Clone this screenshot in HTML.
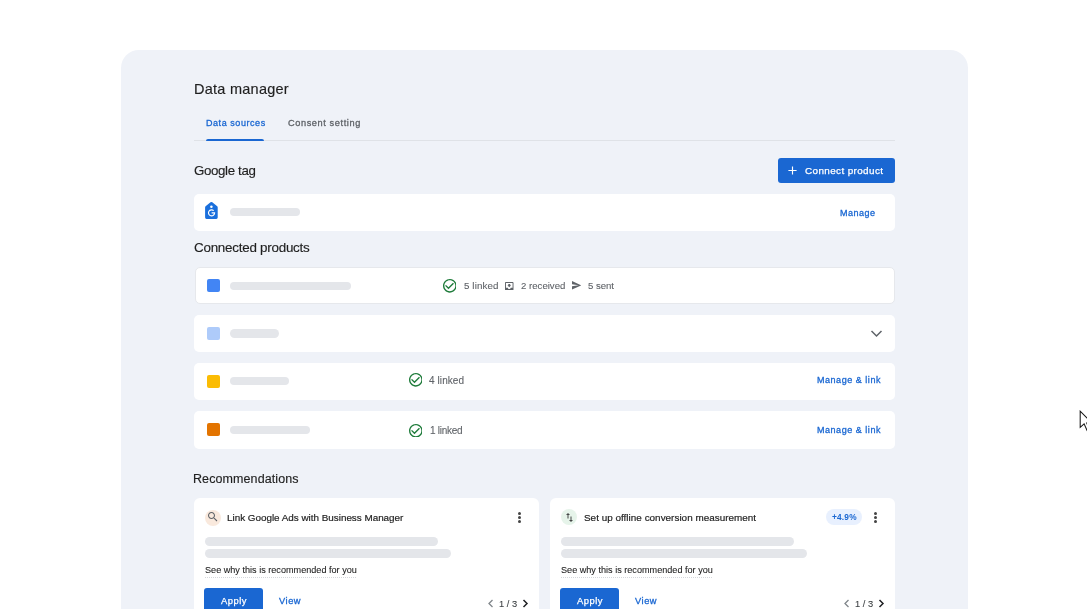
<!DOCTYPE html>
<html><head><meta charset="utf-8">
<style>
html,body{margin:0;padding:0;}
body{width:1087px;height:609px;overflow:hidden;background:#ffffff;position:relative;font-family:"Liberation Sans",sans-serif;}
.a{position:absolute;}
.t{position:absolute;white-space:nowrap;line-height:1;will-change:transform;}
.panel{left:121px;top:50px;width:847px;height:620px;border-radius:18px;background:#eff2f8;}
.card{position:absolute;left:194px;width:701px;background:#fff;border-radius:5px;}
.sk{position:absolute;height:8.5px;border-radius:5px;background:#e4e6ea;}
.sq{position:absolute;width:13px;height:13px;border-radius:2px;left:207px;}
.blue{color:#1a67d2;}
.dark{color:#1f1f1f;}
.grey{color:#5f6368;}
.med{-webkit-text-stroke:0.25px currentColor;}
</style></head>
<body>
<div class="a panel"></div>

<!-- header -->
<div class="a" style="left:194px;top:140px;width:701px;height:1px;background:#dfe2e7;"></div>
<div class="a" style="left:206px;top:138.5px;width:58px;height:2.5px;border-radius:2px 2px 0 0;background:#1a67d2;"></div>


<!-- button -->
<div class="a" style="left:778px;top:158px;width:117px;height:25px;border-radius:3px;background:#1a67d2;"></div>
<svg class="a" style="left:787px;top:165px;" width="11" height="11" viewBox="0 0 11 11"><path d="M5.5 1.4V9.6M1.4 5.5H9.6" stroke="#fff" stroke-width="1.15" fill="none"/></svg>

<!-- google tag card -->
<div class="card" style="top:194px;height:37px;"></div>
<svg class="a" style="left:204px;top:201px;" width="15" height="20" viewBox="0 0 15 20"><path d="M6.5 1.3 Q7.4 0.6 8.3 1.3 L13.2 5.3 Q13.7 5.7 13.7 6.4 V16.6 Q13.7 18 12.3 18 H2.5 Q1.1 18 1.1 16.6 V6.4 Q1.1 5.7 1.6 5.3 Z" fill="#1a6fdc"/><circle cx="7.4" cy="5.8" r="1.25" fill="#fff"/><path d="M7.6 11.9 H10.6 A3.05 3.05 0 1 1 9.7 9.7" stroke="#fff" stroke-width="1.15" fill="none"/></svg>
<div class="sk" style="left:230px;top:207.5px;width:70px;"></div>


<!-- card 1 -->
<div class="card" style="left:194.5px;top:267px;height:34.5px;border:1px solid #e6e8ec;width:698px;"></div>
<div class="sq" style="top:278.5px;background:#4285f4;"></div>
<div class="sk" style="left:230px;top:281.5px;width:121px;"></div>
<svg class="a" style="left:442.8px;top:279px;" width="13.7" height="13.7" viewBox="2 2 20 20"><path d="M16.59 7.58L10 14.17l-3.59-3.58L5 12l5 5 8-8zM12 2C6.48 2 2 6.48 2 12s4.48 10 10 10 10-4.48 10-10S17.52 2 12 2zm0 18c-4.42 0-8-3.58-8-8s3.58-8 8-8 8 3.58 8 8-3.58 8-8 8z" fill="#1e7b3a"/></svg>
<svg class="a" style="left:505px;top:281.5px;" width="8.5" height="8.5" viewBox="3 3 18 18"><path d="M19 3H4.99c-1.11 0-1.98.9-1.98 2L3 19c0 1.1.88 2 1.99 2H19c1.1 0 2-.9 2-2V5c0-1.1-.9-2-2-2zm0 12h-4c0 1.66-1.35 3-3 3s-3-1.34-3-3H4.99V5H19v10zm-3-5h-2V7h-4v3H8l4 4 4-4z" fill="#5f6368"/></svg>
<svg class="a" style="left:572px;top:281.4px;" width="9.2" height="8.6" viewBox="2 3 21 18" preserveAspectRatio="none"><path d="M2.01 21L23 12 2.01 3 2 10l15 2-15 2z" fill="#5f6368"/></svg>

<!-- card 2 -->
<div class="card" style="top:315px;height:37px;"></div>
<div class="sq" style="top:326.8px;background:#aecbfa;"></div>
<div class="sk" style="left:230px;top:329px;width:49px;"></div>
<svg class="a" style="left:869px;top:328px;" width="15" height="11" viewBox="0 0 15 11"><path d="M2.5 3 L7.5 8 L12.5 3" stroke="#5f6368" stroke-width="1.5" fill="none"/></svg>

<!-- card 3 -->
<div class="card" style="top:363px;height:37px;"></div>
<div class="sq" style="top:374.5px;background:#fbbc04;"></div>
<div class="sk" style="left:230px;top:376.5px;width:59px;"></div>
<svg class="a" style="left:408.5px;top:373.3px;" width="13.7" height="13.7" viewBox="2 2 20 20"><path d="M16.59 7.58L10 14.17l-3.59-3.58L5 12l5 5 8-8zM12 2C6.48 2 2 6.48 2 12s4.48 10 10 10 10-4.48 10-10S17.52 2 12 2zm0 18c-4.42 0-8-3.58-8-8s3.58-8 8-8 8 3.58 8 8-3.58 8-8 8z" fill="#1e7b3a"/></svg>

<!-- card 4 -->
<div class="card" style="top:411px;height:37.5px;"></div>
<div class="sq" style="top:422.5px;background:#e37400;"></div>
<div class="sk" style="left:230px;top:425.6px;width:80px;"></div>
<svg class="a" style="left:408.5px;top:423.6px;" width="13.7" height="13.7" viewBox="2 2 20 20"><path d="M16.59 7.58L10 14.17l-3.59-3.58L5 12l5 5 8-8zM12 2C6.48 2 2 6.48 2 12s4.48 10 10 10 10-4.48 10-10S17.52 2 12 2zm0 18c-4.42 0-8-3.58-8-8s3.58-8 8-8 8 3.58 8 8-3.58 8-8 8z" fill="#1e7b3a"/></svg>


<!-- rec card 1 -->
<div class="a" style="left:194px;top:498px;width:345px;height:130px;background:#fff;border-radius:6px;"></div>
<div class="a" style="left:205px;top:509.5px;width:16px;height:16px;border-radius:50%;background:#f9e9dd;"></div>
<svg class="a" style="left:208.3px;top:512.3px;" width="9.7" height="9.7" viewBox="3 3 18 18"><path d="M15.5 14h-.79l-.28-.27C15.41 12.59 16 11.11 16 9.5 16 5.91 13.09 3 9.5 3S3 5.91 3 9.5 5.91 16 9.5 16c1.61 0 3.09-.59 4.23-1.57l.27.28v.79l5 4.99L20.49 19l-4.99-5zm-6 0C7.01 14 5 11.99 5 9.5S7.01 5 9.5 5 14 7.01 14 9.5 11.99 14 9.5 14z" fill="#5f6368"/></svg>
<div class="a" style="left:518px;top:511.7px;width:3px;height:3px;border-radius:50%;background:#444;"></div>
<div class="a" style="left:518px;top:515.8px;width:3px;height:3px;border-radius:50%;background:#444;"></div>
<div class="a" style="left:518px;top:519.9px;width:3px;height:3px;border-radius:50%;background:#444;"></div>
<div class="sk" style="left:205px;top:537px;width:233px;"></div>
<div class="sk" style="left:205px;top:549px;width:246px;"></div>
<div class="a" style="left:205px;top:577px;width:151px;height:0;border-top:1px dotted #d5d8dc;"></div>
<div class="a" style="left:204px;top:588px;width:59px;height:30px;border-radius:3px;background:#1a67d2;"></div>
<svg class="a" style="left:486px;top:598px;" width="9" height="11" viewBox="0 0 9 11"><path d="M6.5 2 L3 5.5 L6.5 9" stroke="#80868b" stroke-width="1.3" fill="none"/></svg>
<svg class="a" style="left:521px;top:598px;" width="9" height="11" viewBox="0 0 9 11"><path d="M2.5 2 L6 5.5 L2.5 9" stroke="#202124" stroke-width="1.5" fill="none"/></svg>

<!-- rec card 2 -->
<div class="a" style="left:550px;top:498px;width:345px;height:130px;background:#fff;border-radius:6px;"></div>
<div class="a" style="left:561px;top:509px;width:16px;height:16px;border-radius:50%;background:#e6f4ea;"></div>
<svg class="a" style="left:565.9px;top:512.7px;" width="7" height="9" viewBox="5 3 14 18"><path d="M16 17.01V10h-2v7.01h-3L15 21l4-3.99h-3zM9 3L5 6.99h3V14h2V6.99h3L9 3z" fill="#444746"/></svg>
<div class="a" style="left:826px;top:509.4px;width:36px;height:15.6px;border-radius:8px;background:#e8f0fe;"></div>
<div class="a" style="left:874.3px;top:511.7px;width:3px;height:3px;border-radius:50%;background:#444;"></div>
<div class="a" style="left:874.3px;top:515.8px;width:3px;height:3px;border-radius:50%;background:#444;"></div>
<div class="a" style="left:874.3px;top:519.9px;width:3px;height:3px;border-radius:50%;background:#444;"></div>
<div class="sk" style="left:561px;top:537px;width:233px;"></div>
<div class="sk" style="left:561px;top:549px;width:246px;"></div>
<div class="a" style="left:561px;top:577px;width:151px;height:0;border-top:1px dotted #d5d8dc;"></div>
<div class="a" style="left:560px;top:588px;width:59px;height:30px;border-radius:3px;background:#1a67d2;"></div>
<svg class="a" style="left:842px;top:598px;" width="9" height="11" viewBox="0 0 9 11"><path d="M6.5 2 L3 5.5 L6.5 9" stroke="#80868b" stroke-width="1.3" fill="none"/></svg>
<svg class="a" style="left:877px;top:598px;" width="9" height="11" viewBox="0 0 9 11"><path d="M2.5 2 L6 5.5 L2.5 9" stroke="#202124" stroke-width="1.5" fill="none"/></svg>

<!-- cursor -->
<svg class="a" style="left:1078.6px;top:409.5px;" width="14" height="22" viewBox="0 0 14 22"><path d="M1.2 1.2 V17.3 L5.1 13.9 L8.1 20.5 L10.5 19.5 L7.7 13.0 L12.9 13.0 Z" fill="#fff" stroke="#151515" stroke-width="1.05" stroke-linejoin="miter"/></svg>
<div class="t" style="left:193.90px;top:81.70px;font-size:14.5px;color:#1f1f1f;letter-spacing:0.255px;-webkit-text-stroke:0.15px #1f1f1f;">Data manager</div>
<div class="t" style="left:205.80px;top:119.20px;font-size:9.0px;color:#1a67d2;letter-spacing:0.555px;-webkit-text-stroke:0.3px #1a67d2;">Data sources</div>
<div class="t" style="left:288.20px;top:119.20px;font-size:9.2px;color:#5f6368;letter-spacing:0.6px;-webkit-text-stroke:0.3px #5f6368;">Consent setting</div>
<div class="t" style="left:194.40px;top:163.90px;font-size:13.3px;color:#1f1f1f;letter-spacing:-0.356px;-webkit-text-stroke:0.15px #1f1f1f;">Google tag</div>
<div class="t" style="left:804.80px;top:166.00px;font-size:9.9px;color:#fff;letter-spacing:0.393px;-webkit-text-stroke:0.25px #fff;">Connect product</div>
<div class="t" style="left:839.60px;top:208.80px;font-size:9.0px;color:#1a67d2;letter-spacing:0.52px;-webkit-text-stroke:0.3px #1a67d2;">Manage</div>
<div class="t" style="left:194.00px;top:240.80px;font-size:13.4px;color:#1f1f1f;letter-spacing:-0.241px;-webkit-text-stroke:0.15px #1f1f1f;">Connected products</div>
<div class="t" style="left:463.80px;top:280.80px;font-size:9.8px;color:#5f6368;letter-spacing:0.1px;-webkit-text-stroke:0.1px #5f6368;">5 linked</div>
<div class="t" style="left:521.00px;top:280.80px;font-size:9.6px;color:#5f6368;letter-spacing:0.011px;-webkit-text-stroke:0.1px #5f6368;">2 received</div>
<div class="t" style="left:588.30px;top:280.80px;font-size:9.6px;color:#5f6368;letter-spacing:-0.02px;-webkit-text-stroke:0.1px #5f6368;">5 sent</div>
<div class="t" style="left:429.40px;top:375.60px;font-size:10px;color:#5f6368;letter-spacing:0.086px;-webkit-text-stroke:0.1px #5f6368;">4 linked</div>
<div class="t" style="left:816.80px;top:376.20px;font-size:9.0px;color:#1a67d2;letter-spacing:0.533px;-webkit-text-stroke:0.3px #1a67d2;">Manage &amp; link</div>
<div class="t" style="left:430.00px;top:425.50px;font-size:10px;color:#5f6368;letter-spacing:-0.257px;-webkit-text-stroke:0.1px #5f6368;">1 linked</div>
<div class="t" style="left:816.80px;top:426.30px;font-size:9.0px;color:#1a67d2;letter-spacing:0.533px;-webkit-text-stroke:0.3px #1a67d2;">Manage &amp; link</div>
<div class="t" style="left:193.40px;top:473.00px;font-size:12.5px;color:#1f1f1f;letter-spacing:0.093px;-webkit-text-stroke:0.15px #1f1f1f;">Recommendations</div>
<div class="t" style="left:227.40px;top:512.70px;font-size:9.9px;color:#1f1f1f;letter-spacing:-0.011px;-webkit-text-stroke:0.2px #1f1f1f;">Link Google Ads with Business Manager</div>
<div class="t" style="left:583.50px;top:512.70px;font-size:9.9px;color:#1f1f1f;letter-spacing:0.028px;-webkit-text-stroke:0.2px #1f1f1f;">Set up offline conversion measurement</div>
<div class="t" style="left:204.80px;top:566.40px;font-size:9.1px;color:#1f1f1f;letter-spacing:0.006px;-webkit-text-stroke:0.1px #1f1f1f;">See why this is recommended for you</div>
<div class="t" style="left:560.80px;top:566.40px;font-size:9.1px;color:#1f1f1f;letter-spacing:0.006px;-webkit-text-stroke:0.1px #1f1f1f;">See why this is recommended for you</div>
<div class="t" style="left:220.90px;top:595.90px;font-size:9.4px;color:#fff;letter-spacing:0.5px;-webkit-text-stroke:0.25px #fff;">Apply</div>
<div class="t" style="left:279.40px;top:596.90px;font-size:9.3px;color:#1a67d2;letter-spacing:0.533px;-webkit-text-stroke:0.3px #1a67d2;">View</div>
<div class="t" style="left:576.90px;top:595.90px;font-size:9.4px;color:#fff;letter-spacing:0.5px;-webkit-text-stroke:0.25px #fff;">Apply</div>
<div class="t" style="left:635.40px;top:596.90px;font-size:9.3px;color:#1a67d2;letter-spacing:0.533px;-webkit-text-stroke:0.3px #1a67d2;">View</div>
<div class="t" style="left:499.10px;top:599.60px;font-size:9.3px;color:#3c4043;letter-spacing:0.025px;-webkit-text-stroke:0.1px #3c4043;">1 / 3</div>
<div class="t" style="left:855.10px;top:599.60px;font-size:9.3px;color:#3c4043;letter-spacing:0.025px;-webkit-text-stroke:0.1px #3c4043;">1 / 3</div>
<div class="t" style="left:831.50px;top:513.20px;font-size:8.3px;color:#1a67d2;letter-spacing:0.2px;font-weight:bold;">+4.9%</div>
</body></html>
